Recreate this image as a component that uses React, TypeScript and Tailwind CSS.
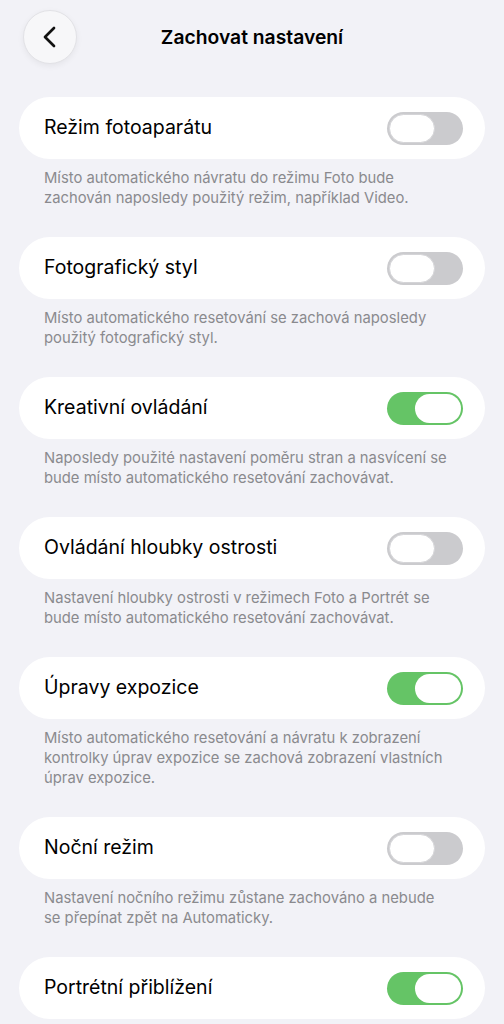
import React from "react";

type Item = {
  title: string;
  on: boolean;
  lines: string[];
};

const items: Item[] = [
  {
    title: "Režim fotoaparátu",
    on: false,
    lines: [
      "Místo automatického návratu do režimu Foto bude",
      "zachován naposledy použitý režim, například Video.",
    ],
  },
  {
    title: "Fotografický styl",
    on: false,
    lines: [
      "Místo automatického resetování se zachová naposledy",
      "použitý fotografický styl.",
    ],
  },
  {
    title: "Kreativní ovládání",
    on: true,
    lines: [
      "Naposledy použité nastavení poměru stran a nasvícení se",
      "bude místo automatického resetování zachovávat.",
    ],
  },
  {
    title: "Ovládání hloubky ostrosti",
    on: false,
    lines: [
      "Nastavení hloubky ostrosti v režimech Foto a Portrét se",
      "bude místo automatického resetování zachovávat.",
    ],
  },
  {
    title: "Úpravy expozice",
    on: true,
    lines: [
      "Místo automatického resetování a návratu k zobrazení",
      "kontrolky úprav expozice se zachová zobrazení vlastních",
      "úprav expozice.",
    ],
  },
  {
    title: "Noční režim",
    on: false,
    lines: [
      "Nastavení nočního režimu zůstane zachováno a nebude",
      "se přepínat zpět na Automaticky.",
    ],
  },
  {
    title: "Portrétní přiblížení",
    on: true,
    lines: [],
  },
];

function Toggle({ on }: { on: boolean }) {
  return (
    <div
      className={
        on
          ? "w-[76px] h-[33px] rounded-full p-[2px] bg-[#65c466] flex justify-end"
          : "w-[76px] h-[33px] rounded-full p-[2px] bg-[#cbcbce] flex justify-start"
      }
    >
      <div
        className={
          on
            ? "w-[46px] h-[29px] rounded-full bg-white"
            : "w-[46px] h-[29px] rounded-full bg-white border border-[#d4d4d7]"
        }
      />
    </div>
  );
}

export default function App() {
  return (
    <div
      className="min-h-screen bg-[#f2f2f7] overflow-hidden"
      style={{ fontFamily: "Inter, 'Noto Sans', sans-serif" }}
    >
      <div className="grid grid-cols-[54px_1fr_54px] items-center px-[23px] pt-[10px]">
        <button className="w-[54px] h-[54px] rounded-full bg-[#f7f7f9] border border-[#e2e2e6] shadow-[0_2px_6px_rgba(0,0,0,0.06)] flex items-center justify-center">
          <svg width="24" height="24" viewBox="0 0 24 24" fill="none">
            <path
              d="M16 3L7 12l9 9"
              stroke="#111"
              strokeWidth="2.7"
              strokeLinecap="round"
              strokeLinejoin="round"
            />
          </svg>
        </button>
        <h1 className="text-center text-[19.3px] font-semibold text-black">
          Zachovat nastavení
        </h1>
        <div />
      </div>

      <div className="mt-[33px] px-[19px]">
        {items.map((it) => (
          <div key={it.title}>
            <div className="h-[62px] rounded-[31px] bg-white flex items-center justify-between pl-[25px] pr-[22px]">
              <span className="text-[19.5px] text-black">{it.title}</span>
              <Toggle on={it.on} />
            </div>
            {it.lines.length > 0 && (
              <div className="mt-[9px] mb-[29px] pl-[25px] text-[14.8px] leading-[20px] text-[#8a8a8e]">
                {it.lines.map((l) => (
                  <div key={l} className="whitespace-nowrap">
                    {l}
                  </div>
                ))}
              </div>
            )}
          </div>
        ))}
      </div>
    </div>
  );
}
